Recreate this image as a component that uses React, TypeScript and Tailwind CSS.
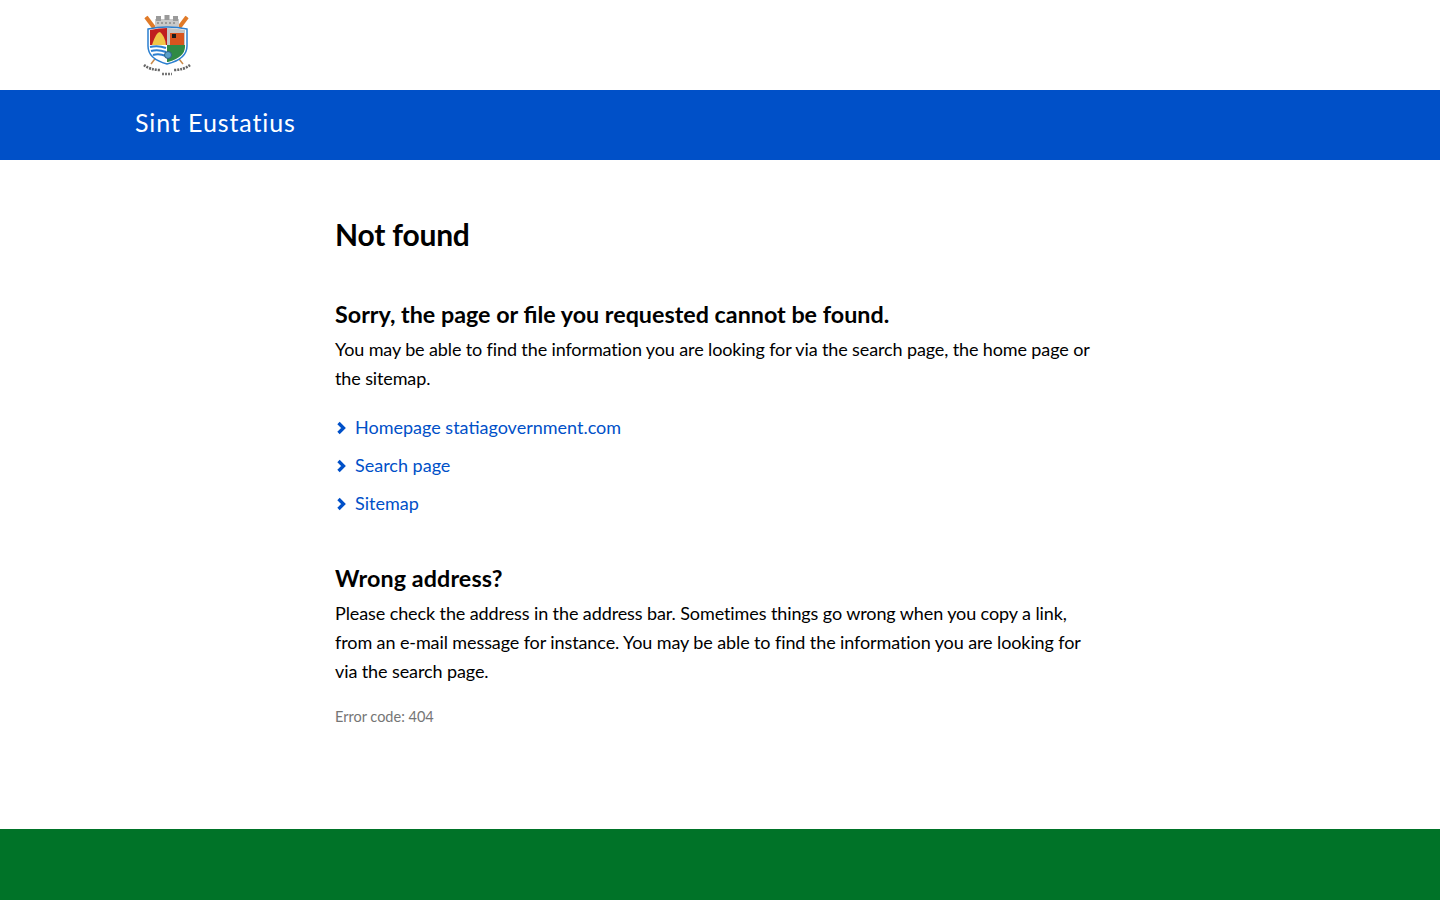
const links = ['Homepage statiagovernment.com', 'Search page', 'Sitemap']

function Crest(): JSX.Element {
  return (
    <svg viewBox="0 0 50 62" className="w-[50px] h-[62px] blur-[0.4px]">
      {/* oars */}
      <path d="M4 3 L41 50" stroke="#c98a4a" strokeWidth="1.500" />
      <path d="M45 3 L9 50" stroke="#c98a4a" strokeWidth="1.500" />
      <path d="M4 3 L13 15" stroke="#e07a28" strokeWidth="4" />
      <path d="M45 3 L36 15" stroke="#e07a28" strokeWidth="4" />
      {/* crown */}
      <path d="M13 5h24v8H13z" fill="#c9c9c9" />
      <path d="M14 2h5v5h-5zM22.500 1h5v5h-5zM31 2h5v5h-5z" fill="#9a9a9a" />
      <path d="M15 9h20" stroke="#6a6a6a" strokeDasharray="2 2" />
      {/* shield */}
      <path d="M6 15 Q25 11 45 15 V32 Q45 45 25 50 Q6 45 6 32 Z" fill="#fff" stroke="#2b7fd0" strokeWidth="1.500" />
      <path d="M8 16 Q17 14 25 14 V31 H8 Z" fill="#c01f1f" />
      <path d="M25 14 Q33 14 43 16 V31 H25 Z" fill="#c4c4c4" />
      <path d="M28 19h14v12H28z" fill="#d8541e" />
      <path d="M30 20h4v4h-4z" fill="#1c1c1c" />
      <path d="M25 31 H43 V33 Q43 43 26 48 H25 Z" fill="#2f8a45" />
      <path d="M10 31 Q14 18 18 18 Q23 22 24 31 Z" fill="#f0c648" />
      <path d="M8 33 Q16 31 24 34 M9 37 Q16 35 24 38 M11 41 Q17 39 24 42" stroke="#2b7fd0" strokeWidth="2" fill="none" />
      <circle cx="26" cy="41" r="3.500" fill="#5aa0c8" stroke="#2c5f86" />
      {/* motto ribbon */}
      <path d="M2 51 Q8 56 19 56" stroke="#666" strokeWidth="2.500" fill="none" strokeDasharray="2 1" />
      <path d="M48 51 Q42 56 31 56" stroke="#666" strokeWidth="2.500" fill="none" strokeDasharray="2 1" />
      <path d="M20 60h10" stroke="#777" strokeWidth="2.500" strokeDasharray="2 1" />
    </svg>
  )
}

export default function App(): JSX.Element {
  return (
    <div className="min-h-[900px] flex flex-col bg-white text-black font-['Lato',sans-serif]">
      {/* Header */}
      <header className="h-[90px] pl-[142px] pt-[14px]">
        <Crest />
      </header>
      <div className="h-[70px] bg-[#0050c8] pl-[135px] pt-[15px] text-white text-[25px] leading-[34px] tracking-[0.9px]">
        Sint Eustatius
      </div>

      {/* Content */}
      <main className="flex-1 pl-[335px] pt-[53px]">
        <div className="w-[765px]">
          <h1 className="text-[30px] leading-[42px] font-bold tracking-[-0.2px]">Not found</h1>

          <h2 className="mt-[43px] text-[23.300px] leading-[32px] font-bold">
            Sorry, the page or file you requested cannot be found.
          </h2>
          <p className="mt-[5px] text-[18px] leading-[29px] tracking-[-0.12px]">
            You may be able to find the information you are looking for via the search page, the home page or the sitemap.
          </p>
          <ul className="mt-[20px] flex flex-col gap-[10px]">
            {links.map((link) => (
              <li key={link} className="flex items-center h-[28px] text-[18px] text-[#0050c8]">
                <svg viewBox="0 0 24 24" fill="none" stroke="currentColor" strokeWidth="4" className="w-[20px] h-[20px] mt-[1px] -ml-[4px] mr-[4px]">
                  <path d="M9 6l6 6-6 6" />
                </svg>
                <a href="#">{link}</a>
              </li>
            ))}
          </ul>

          <h2 className="mt-[45px] text-[23.300px] leading-[32px] font-bold tracking-[0.1px]">Wrong address?</h2>
          <p className="mt-[5px] text-[18px] leading-[29px] tracking-[-0.1px]">
            Please check the address in the address bar. Sometimes things go wrong when you copy a link, from an e-mail message for instance. You may be able to find the information you are looking for via the search page.
          </p>
          <p className="mt-[21px] text-[14.500px] leading-[20px] text-[#757575]">Error code: 404</p>
        </div>
      </main>

      <footer className="h-[71px] bg-[#007328]" />
    </div>
  )
}
